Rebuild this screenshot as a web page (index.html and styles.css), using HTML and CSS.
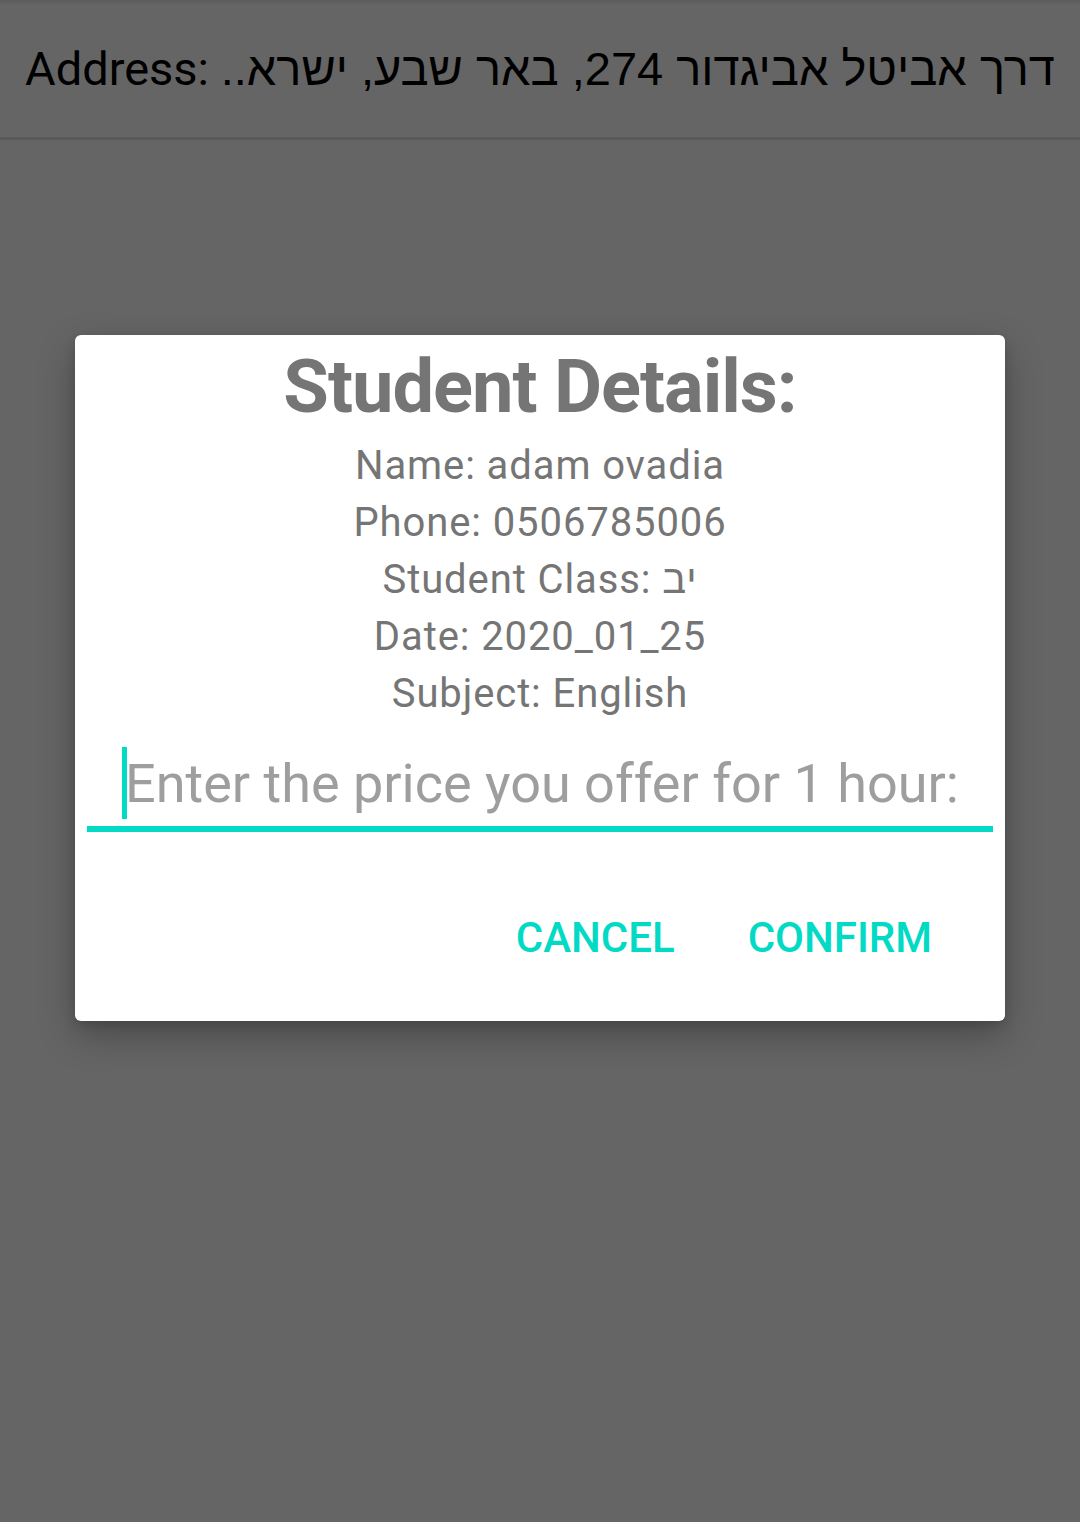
FILE: index.html
```html
<!DOCTYPE html>
<html lang="en">
<head>
<meta charset="utf-8">
<title>Student Details</title>
<link rel="stylesheet" href="styles.css">
</head>
<body>
<div class="screen">
  <header class="topbar">
    <span class="address">Address: <span dir="rtl" class="heb">דרך אביטל אביגדור 274, באר שבע, ישרא..</span></span>
  </header>
  <main class="content"></main>

  <div class="dialog" role="dialog">
    <h1 class="title">Student Details:</h1>
    <div class="details">
      <p>Name: adam ovadia</p>
      <p>Phone: 0506785006</p>
      <p>Student Class: <span dir="rtl">יב</span></p>
      <p>Date: 2020_01_25</p>
      <p>Subject: English</p>
    </div>
    <div class="field">
      <span class="cursor"></span>
      <span class="placeholder">Enter the price you offer for 1 hour:</span>
    </div>
    <div class="actions">
      <span class="btn">CANCEL</span>
      <span class="btn">CONFIRM</span>
    </div>
  </div>
</div>
</body>
</html>
```
FILE: styles.css
```css
html, body {
  margin: 0;
  padding: 0;
}
body {
  background: #656565;
  font-family: Roboto, "Liberation Sans", sans-serif;
}
.screen {
  position: relative;
  width: 1080px;
  height: 1522px;
  overflow: hidden;
  background: #656565;
}
.topbar {
  height: 140px;
  box-sizing: border-box;
  border-bottom: 3px solid #595959;
  background: linear-gradient(#5c5c5c 0, #656565 5px, #656565 100%);
  display: flex;
  align-items: center;
  padding-left: 25px;
  white-space: nowrap;
}
.address {
  font-family: Roboto, "Liberation Sans", sans-serif;
  font-size: 47px;
  color: #000;
}
.heb {
  display: inline-block;
  font-family: "Liberation Sans", "DejaVu Sans", sans-serif;
  font-size: 47px;
}
.content {
  height: 1382px;
}
.dialog {
  position: absolute;
  left: 75px;
  top: 335px;
  width: 930px;
  height: 686px;
  box-sizing: border-box;
  background: #fff;
  border-radius: 6px;
  box-shadow: 0 14px 36px rgba(0,0,0,0.28), 0 4px 10px rgba(0,0,0,0.12);
  padding: 12px 12px 0;
  display: flex;
  flex-direction: column;
}
.title {
  margin: 0;
  font-size: 74px;
  line-height: 80px;
  font-weight: 700;
  letter-spacing: -1px;
  color: #757575;
  text-align: center;
}
.details {
  margin-top: 10px;
  text-align: center;
  color: #757575;
  font-size: 40px;
  line-height: 57px;
  letter-spacing: 0.9px;
}
.details p {
  margin: 0;
}
.field {
  position: relative;
  margin-top: 25px;
  height: 79px;
  border-bottom: 6px solid #03dac5;
  display: flex;
  align-items: flex-start;
  padding-left: 35px;
}
.cursor {
  position: absolute;
  left: 35px;
  top: 0;
  width: 5px;
  height: 72px;
  background: #03dac5;
}
.placeholder {
  display: inline-block;
  margin-top: 7px;
  margin-left: 3px;
  font-size: 54px;
  line-height: 60px;
  color: #9e9e9e;
  white-space: nowrap;
}
.actions {
  display: flex;
  justify-content: flex-end;
  gap: 73px;
  padding-right: 61px;
  margin-top: 81px;
}
.btn {
  font-size: 42px;
  line-height: 50px;
  font-weight: 500;
  color: #03dac5;
}
```
